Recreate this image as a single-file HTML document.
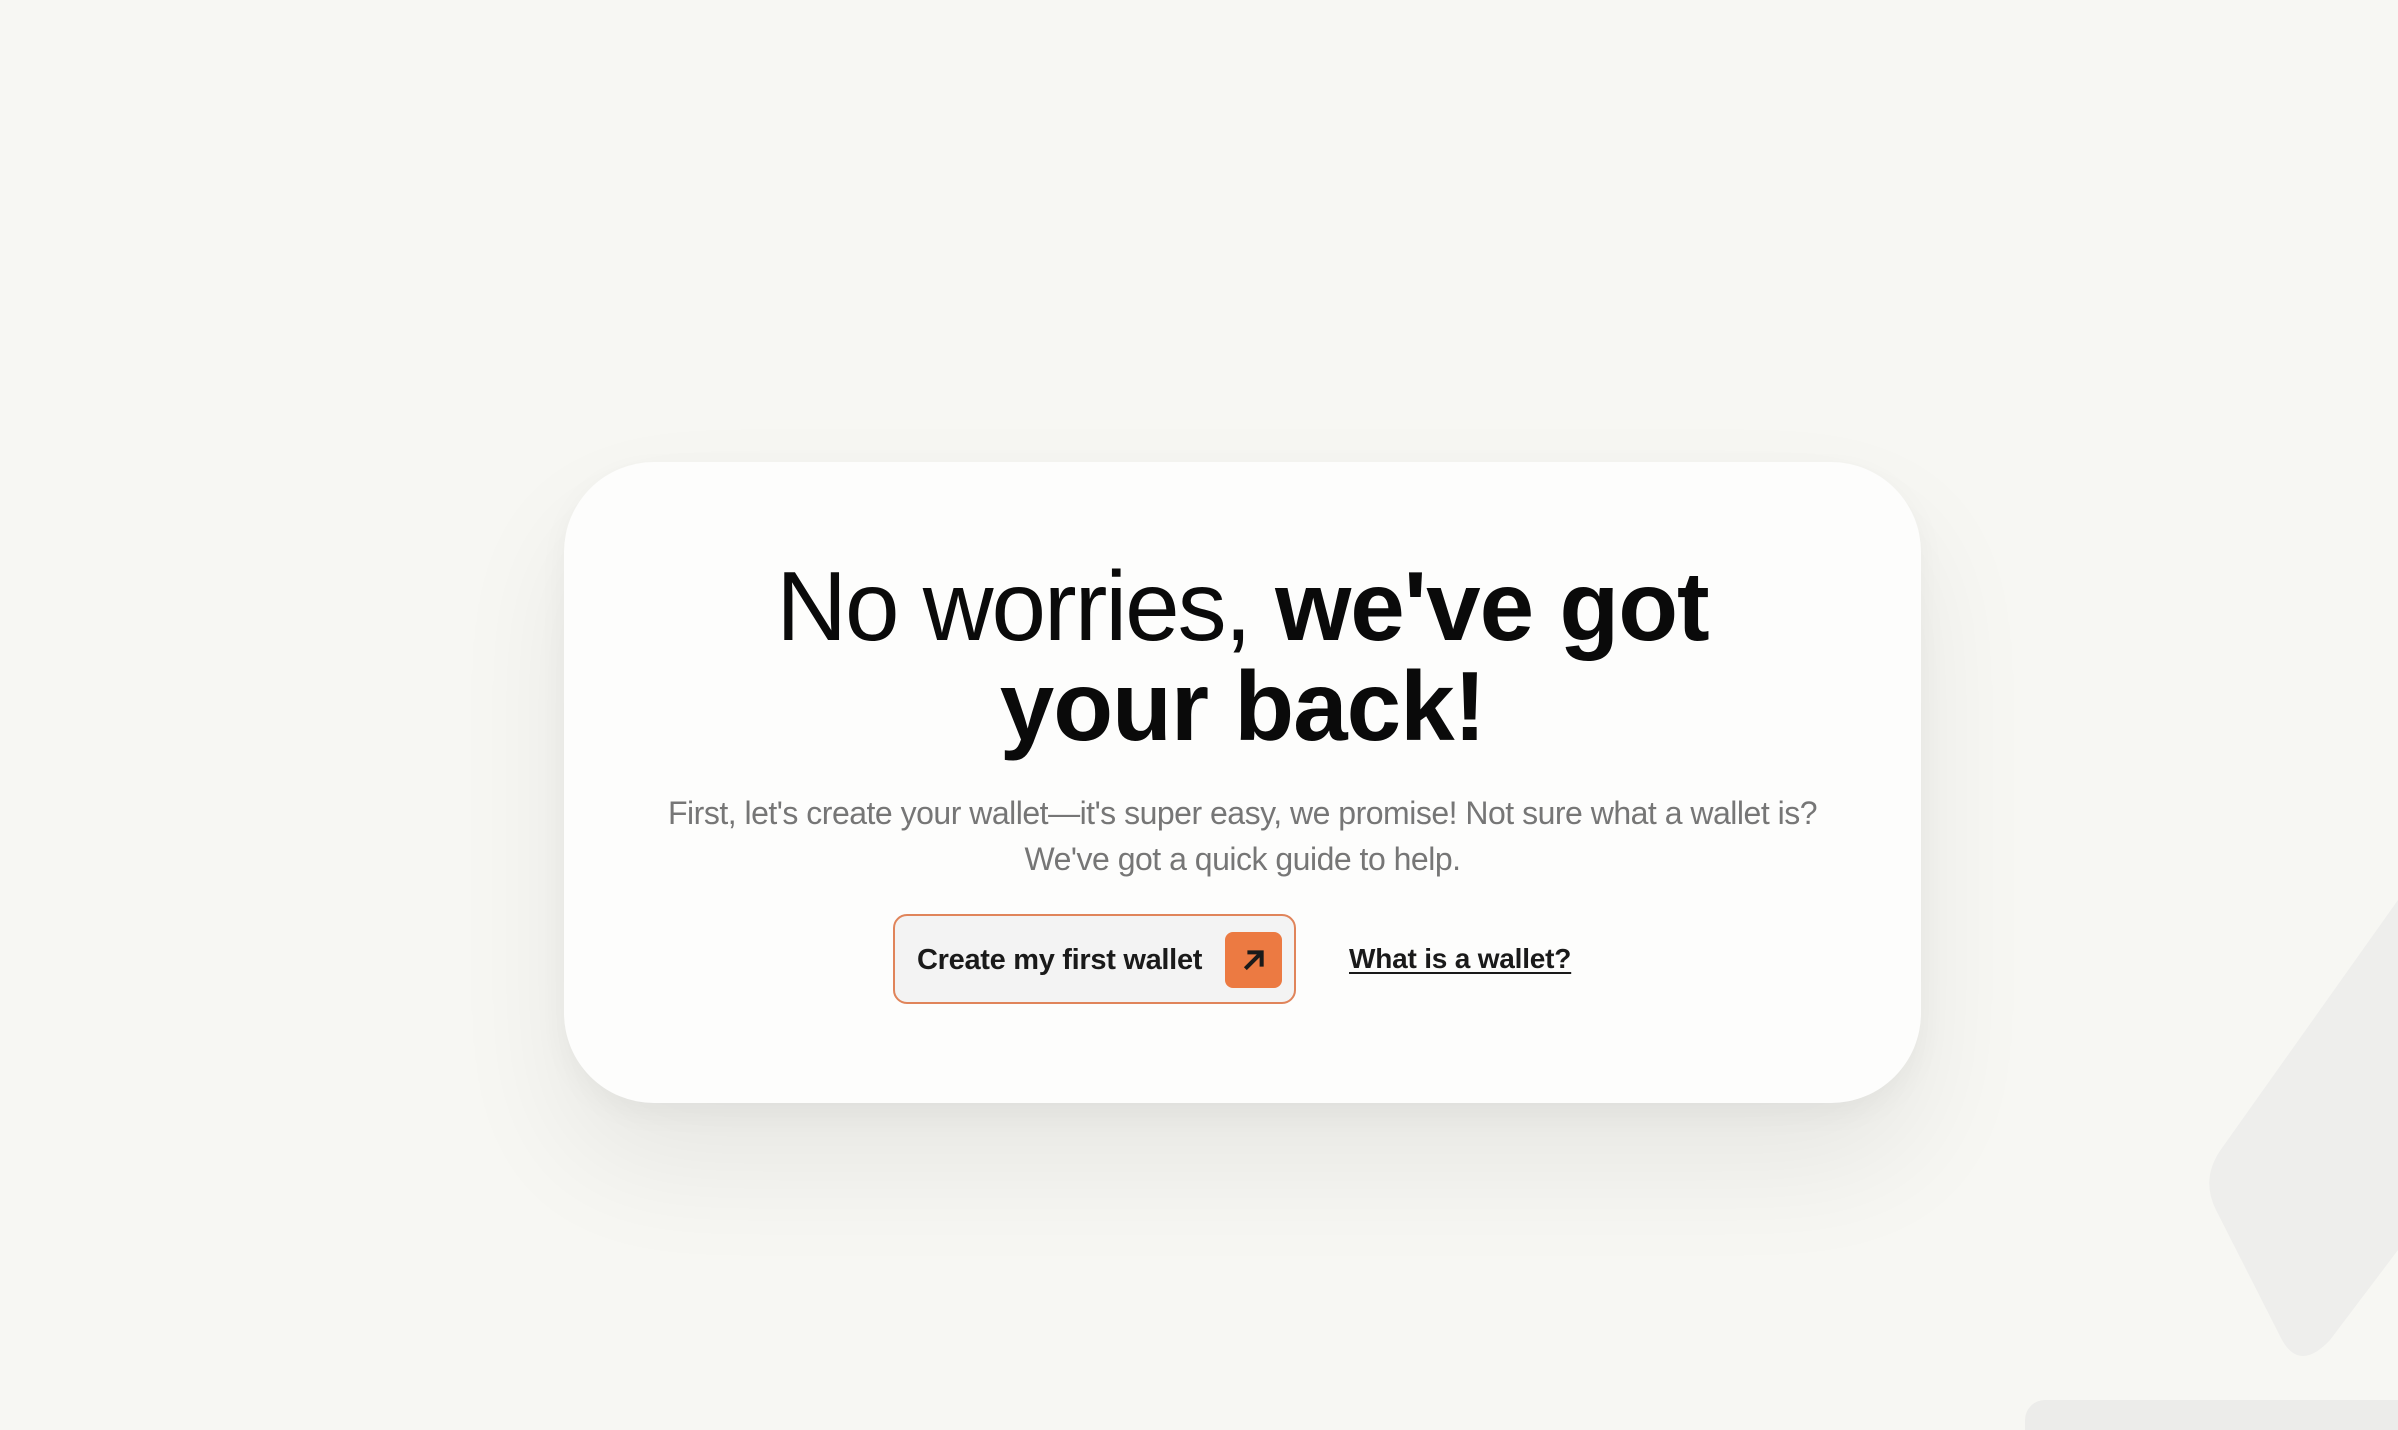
<!DOCTYPE html>
<html><head><meta charset="utf-8"><style>
html,body{margin:0;padding:0}
body{width:2398px;height:1418px;background:#f7f7f3;position:relative;overflow:hidden;font-family:"Liberation Sans",sans-serif}
.shape{position:absolute;left:0;top:0}
.band{position:absolute;left:2025px;top:1400px;width:400px;height:30px;background:#ececea;border-radius:20px 0 0 0}
.card{position:absolute;left:564px;top:462px;width:1357px;height:641px;background:#fdfdfc;border-radius:90px;box-shadow:0 60px 120px rgba(0,0,0,0.07),0 10px 30px rgba(0,0,0,0.04)}
h1{margin:0;position:absolute;left:564px;width:1357px;text-align:center;top:556px;font-size:98px;line-height:100px;font-weight:400;color:#0a0a0a;letter-spacing:-2px}
h1 b{font-weight:900;letter-spacing:-1px}
.sub{position:absolute;left:564px;width:1357px;text-align:center;top:790px;font-size:32px;line-height:46px;color:#767676;letter-spacing:-0.5px}
.btn{position:absolute;left:893px;top:914px;width:403px;height:90px;box-sizing:border-box;border:2px solid #e0845a;border-radius:14px;background:#f3f3f3}
.btn span{position:absolute;left:22px;top:28px;font-size:29px;font-weight:700;color:#1a1a1a;letter-spacing:-0.3px}
.sq{position:absolute;left:330px;top:16px;width:57px;height:56px;border-radius:8px;background:#ec7a42}
.link{position:absolute;left:1349px;top:943px;font-size:28px;font-weight:700;color:#1a1a1a;text-decoration:underline;text-underline-offset:4px;letter-spacing:-0.2px}
</style></head><body>
<svg class="shape" width="2398" height="1418"><path d="M2398 900 L2222 1148 Q2200 1178 2216 1210 L2282 1340 Q2300 1372 2330 1340 L2398 1250 Z" fill="#eeeeec"/></svg>
<div class="band"></div>
<div class="card"></div>
<h1>No worries, <b>we've got<br>your back!</b></h1>
<div class="sub">First, let's create your wallet—it's super easy, we promise! Not sure what a wallet is?<br>We've got a quick guide to help.</div>
<div class="btn"><span>Create my first wallet</span><div class="sq"><svg width="57" height="56" viewBox="0 0 56 55"><path d="M20 36 L35 21 M22 20 H36 V34" stroke="#1a1a1a" stroke-width="4" fill="none"/></svg></div></div>
<div class="link">What is a wallet?</div>
</body></html>
